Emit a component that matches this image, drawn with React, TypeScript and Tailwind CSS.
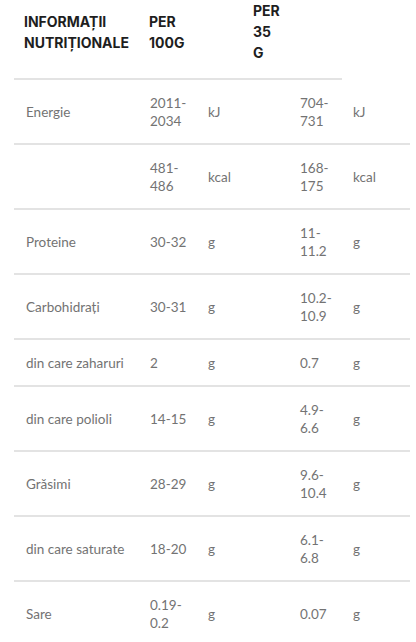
import React from "react";

const rows: [string, string, string, string, string][] = [
  ["Energie", "2011-\n2034", "kJ", "704-\n731", "kJ"],
  ["", "481-\n486", "kcal", "168-\n175", "kcal"],
  ["Proteine", "30-32", "g", "11-\n11.2", "g"],
  ["Carbohidrați", "30-31", "g", "10.2-\n10.9", "g"],
  ["din care zaharuri", "2", "g", "0.7", "g"],
  ["din care polioli", "14-15", "g", "4.9-\n6.6", "g"],
  ["Grăsimi", "28-29", "g", "9.6-\n10.4", "g"],
  ["din care saturate", "18-20", "g", "6.1-\n6.8", "g"],
  ["Sare", "0.19-\n0.2", "g", "0.07", "g"],
];

function Cell({ text }: { text: string }) {
  return (
    <div className="flex items-center px-[12px] whitespace-pre">{text}</div>
  );
}

export default function App() {
  return (
    <div className="w-[416px] h-[642px] overflow-hidden bg-white">
      <div className="ml-[14px] w-[396px]">
        <div
          className="grid grid-cols-[124px_103px_101px] w-[328px] border-b-2 border-[#e3e3e3] pb-[15px] text-[14px] leading-[21px] font-bold text-[#1e1e1e] uppercase"
          style={{ fontFamily: "Inter, 'Noto Sans', sans-serif" }}
        >
          <div className="flex items-center px-[10px]">Informații<br />Nutriționale</div>
          <div className="flex items-center px-[11px]">Per<br />100g</div>
          <div className="flex items-center px-[12px]">Per<br />35<br />g</div>
        </div>
        <div
          className="text-[13.5px] leading-[18px] text-[#737373]"
          style={{ fontFamily: "Lato, sans-serif" }}
        >
          {rows.map((r, i) => (
            <div
              key={i}
              className={`grid grid-cols-[124px_58px_92px_53px_69px] py-[13.5px] ${i < rows.length - 1 ? "border-b-2 border-[#e3e3e3]" : ""}`}
            >
              {r.map((c, j) => (
                <Cell key={j} text={c} />
              ))}
            </div>
          ))}
        </div>
      </div>
    </div>
  );
}
